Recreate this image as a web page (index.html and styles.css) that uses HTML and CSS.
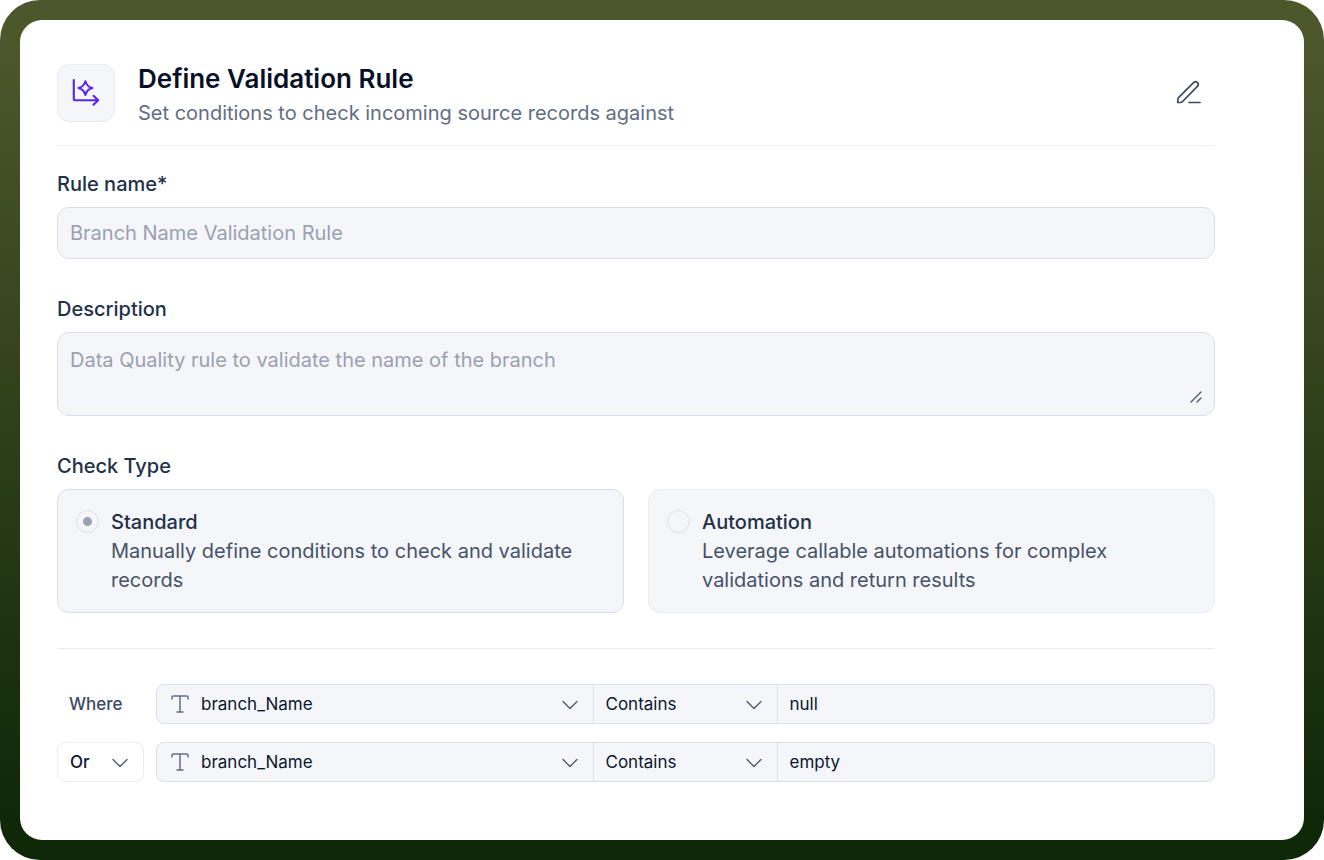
FILE: index.html
```html
<!DOCTYPE html>
<html lang="en">
<head>
  <meta charset="UTF-8" />
  <title>Define Validation Rule</title>
  <meta name="viewport" content="width=device-width, initial-scale=1.0">
  <link rel="stylesheet" href="styles.css">
</head>
<body>
  <div class="frame">
    <main class="panel">
      <header class="header">
        <div class="header-icon">
          <svg width="30" height="30" viewBox="0 0 30 30" fill="none" stroke="currentColor" stroke-width="2.1" stroke-linecap="round" stroke-linejoin="round">
            <path d="M2.8 2v19.200a1 1 0 0 0 1 1H27" />
            <path d="M22.500 17.800l4.600 4.400-4.600 4.600" />
            <path d="M14.400 3.200c1.200 4.200 2.600 5.700 6.900 6.900-4.300 1.200-5.700 2.600-6.900 6.900-1.200-4.300-2.600-5.700-6.900-6.900 4.300-1.200 5.700-2.700 6.900-6.900z" />
          </svg>
        </div>
        <div class="header-text">
          <h1>Define Validation Rule</h1>
          <p>Set conditions to check incoming source records against</p>
        </div>
        <button class="edit-btn" type="button" aria-label="Edit">
          <svg width="26" height="26" viewBox="0 0 26 26" fill="none" stroke="currentColor" stroke-width="1.7" stroke-linecap="round" stroke-linejoin="round">
            <path d="M1.800 22.500v-2.700a3.400 3.400 0 0 1 1-2.400L17.800 2.400a2.700 2.700 0 0 1 3.800 3.800L6.600 21.500a3.400 3.400 0 0 1-2.400 1z" />
            <path d="M13 22.500h11" />
          </svg>
        </button>
      </header>

      <form class="form">
        <div class="field">
          <label for="ruleName">Rule name*</label>
          <input class="text-box" id="ruleName" type="text" placeholder="Branch Name Validation Rule">
        </div>

        <div class="field">
          <label for="description">Description</label>
          <div class="area-wrap">
            <textarea class="text-box" id="description" placeholder="Data Quality rule to validate the name of the branch"></textarea>
            <svg class="grip" width="12" height="12" viewBox="0 0 12 12" fill="none" stroke="currentColor" stroke-width="1.3" stroke-linecap="round">
              <path d="M1 11L11 1M7 11l4-4" />
            </svg>
          </div>
        </div>

        <fieldset class="field">
          <legend>Check Type</legend>
          <div class="options">
            <label class="option">
              <input type="radio" name="checkType" value="standard" checked>
              <span class="option-text"><strong>Standard</strong>Manually define conditions to check and validate records</span>
            </label>
            <label class="option">
              <input type="radio" name="checkType" value="automation">
              <span class="option-text"><strong>Automation</strong>Leverage callable automations for complex validations and return results</span>
            </label>
          </div>
        </fieldset>

        <div class="conditions">
          <div class="condition">
            <span class="where">Where</span>
            <div class="condition-box">
              <div class="select-wrap">
                <svg class="type-icon" width="18" height="18" viewBox="0 0 18 18" fill="none" stroke="currentColor" stroke-width="1.5" stroke-linecap="round" stroke-linejoin="round">
                  <path d="M1 4V2.500A1.500 1.500 0 0 1 2.500 1h13A1.500 1.500 0 0 1 17 2.500V4M9 1v16M6 17h6" />
                </svg>
                <select class="has-icon" aria-label="Field">
                  <option>branch_Name</option>
                </select>
                <svg class="chevron" width="16" height="10" viewBox="0 0 16 10" fill="none" stroke="currentColor" stroke-width="1.3" stroke-linecap="round" stroke-linejoin="round"><path d="M1 1.500l7 7 7-7" /></svg>
              </div>
              <div class="select-wrap">
                <select aria-label="Operator">
                  <option>Contains</option>
                </select>
                <svg class="chevron" width="16" height="10" viewBox="0 0 16 10" fill="none" stroke="currentColor" stroke-width="1.3" stroke-linecap="round" stroke-linejoin="round"><path d="M1 1.500l7 7 7-7" /></svg>
              </div>
              <input type="text" value="null" aria-label="Value">
            </div>
          </div>

          <div class="condition">
            <div class="select-wrap join">
              <select aria-label="Join">
                <option>Or</option>
                <option>And</option>
              </select>
              <svg class="chevron" width="16" height="10" viewBox="0 0 16 10" fill="none" stroke="currentColor" stroke-width="1.3" stroke-linecap="round" stroke-linejoin="round"><path d="M1 1.500l7 7 7-7" /></svg>
            </div>
            <div class="condition-box">
              <div class="select-wrap">
                <svg class="type-icon" width="18" height="18" viewBox="0 0 18 18" fill="none" stroke="currentColor" stroke-width="1.5" stroke-linecap="round" stroke-linejoin="round">
                  <path d="M1 4V2.500A1.500 1.500 0 0 1 2.500 1h13A1.500 1.500 0 0 1 17 2.500V4M9 1v16M6 17h6" />
                </svg>
                <select class="has-icon" aria-label="Field">
                  <option>branch_Name</option>
                </select>
                <svg class="chevron" width="16" height="10" viewBox="0 0 16 10" fill="none" stroke="currentColor" stroke-width="1.3" stroke-linecap="round" stroke-linejoin="round"><path d="M1 1.500l7 7 7-7" /></svg>
              </div>
              <div class="select-wrap">
                <select aria-label="Operator">
                  <option>Contains</option>
                </select>
                <svg class="chevron" width="16" height="10" viewBox="0 0 16 10" fill="none" stroke="currentColor" stroke-width="1.3" stroke-linecap="round" stroke-linejoin="round"><path d="M1 1.500l7 7 7-7" /></svg>
              </div>
              <input type="text" value="empty" aria-label="Value">
            </div>
          </div>
        </div>
      </form>
    </main>
  </div>
</body>
</html>
```

FILE: styles.css
```css
* {
  box-sizing: border-box;
}
body {
  margin: 0;
  background: #fff;
  color: #23304a;
  font-family: Inter, "Liberation Sans", sans-serif;
  font-size: 20px;
}
h1, p {
  margin: 0;
}
svg {
  display: block;
}
input, textarea, select, button {
  font-family: inherit;
  font-size: inherit;
  color: inherit;
}
.frame {
  display: flex;
  min-height: 100vh;
  padding: 20px;
  border-radius: 40px;
  background: linear-gradient(#4c572b 5%, #0f2808 95%);
}
.panel {
  flex: 1;
  min-width: 0;
  padding: 44px 89px 57px 37px;
  border-radius: 22px;
  background: #fff;
}

/* header */
.header {
  display: flex;
  align-items: flex-start;
  padding-bottom: 18px;
  border-bottom: 1px solid #eaebf3;
}
.header-icon {
  display: flex;
  align-items: center;
  justify-content: center;
  width: 58px;
  height: 58px;
  margin-right: 23px;
  border: 1px solid #eaebf3;
  border-radius: 12px;
  background: #f5f6fa;
  color: #5527ee;
}
.header-text {
  flex: 1;
}
.header-text h1 {
  margin-bottom: 5px;
  font-size: 26px;
  font-weight: 600;
  line-height: 30px;
  color: #071026;
}
.header-text p {
  line-height: 28px;
  color: #626d84;
}
.edit-btn {
  display: flex;
  align-items: center;
  justify-content: center;
  width: 52px;
  height: 58px;
  padding: 0;
  border: none;
  background: none;
  color: #3d4a63;
  cursor: pointer;
}

/* fields */
.form {
  padding-top: 25px;
}
.field {
  margin: 0 0 37px;
  padding: 0;
  border: none;
}
.field > label,
.field > legend {
  display: block;
  margin-bottom: 10px;
  padding: 0;
  font-weight: 500;
  line-height: 26px;
}
.text-box {
  display: block;
  width: 100%;
  height: 52px;
  padding: 0 12px;
  border: 1px solid #dcdde8;
  border-radius: 12px;
  background: #f5f6fa;
}
.text-box::placeholder {
  color: #9aa1b1;
  opacity: 1;
}
textarea.text-box {
  height: 84px;
  padding-top: 14px;
  line-height: 26px;
  resize: vertical;
}
textarea::-webkit-resizer {
  display: none;
}
.area-wrap {
  position: relative;
}
.grip {
  position: absolute;
  right: 13px;
  bottom: 13px;
  color: #4b566c;
  pointer-events: none;
}

/* check type */
.options {
  display: grid;
  grid-template-columns: 1fr 1fr;
  gap: 24px;
}
.option {
  display: flex;
  gap: 12px;
  padding: 18px 18px 17px;
  border: 1px solid #eaebf3;
  border-radius: 12px;
  background: #f5f6fa;
  line-height: 29px;
  color: #465269;
}
.option:has(:checked) {
  border-color: #dcdde8;
}
.option input {
  flex: none;
  appearance: none;
  width: 23px;
  height: 23px;
  margin: 2px 0;
  border: 1px solid #dfe0e6;
  border-radius: 50%;
}
.option input:checked {
  background: radial-gradient(circle, #9aa1b1 4px, transparent 5px);
}
.option strong {
  display: block;
  font-weight: 500;
  color: #23304a;
}

/* conditions */
.conditions {
  display: grid;
  gap: 18px;
  margin-top: -2px;
  padding-top: 35px;
  border-top: 1px solid #eaebf3;
}
.condition {
  display: grid;
  grid-template-columns: 87px 1fr;
  gap: 12px;
  align-items: center;
  font-size: 17px;
  color: #0b1730;
}
.where {
  padding-left: 12px;
  font-weight: 500;
  color: #3d4a63;
}
.condition-box {
  display: grid;
  grid-template-columns: 1fr 184px 1fr;
  height: 40px;
  border: 1px solid #dcdfe8;
  border-radius: 8px;
  background: #f5f6fa;
}
.condition-box input {
  min-width: 0;
  padding: 0 12px;
  border: none;
  background: none;
}
.select-wrap {
  position: relative;
  display: grid;
}
.condition-box .select-wrap {
  border-right: 1px solid #dcdfe8;
}
.select-wrap select {
  appearance: none;
  min-width: 0;
  padding: 0 36px 0 12px;
  border: none;
  background: none;
}
.select-wrap select.has-icon {
  padding-left: 44px;
}
.type-icon {
  position: absolute;
  top: 10px;
  left: 14px;
  color: #626d84;
  pointer-events: none;
}
.chevron {
  position: absolute;
  top: 15px;
  right: 15px;
  color: #4b566c;
  pointer-events: none;
}
.join {
  height: 40px;
  border: 1px solid #eaebf3;
  border-radius: 8px;
}
.join select {
  font-weight: 500;
}
```
